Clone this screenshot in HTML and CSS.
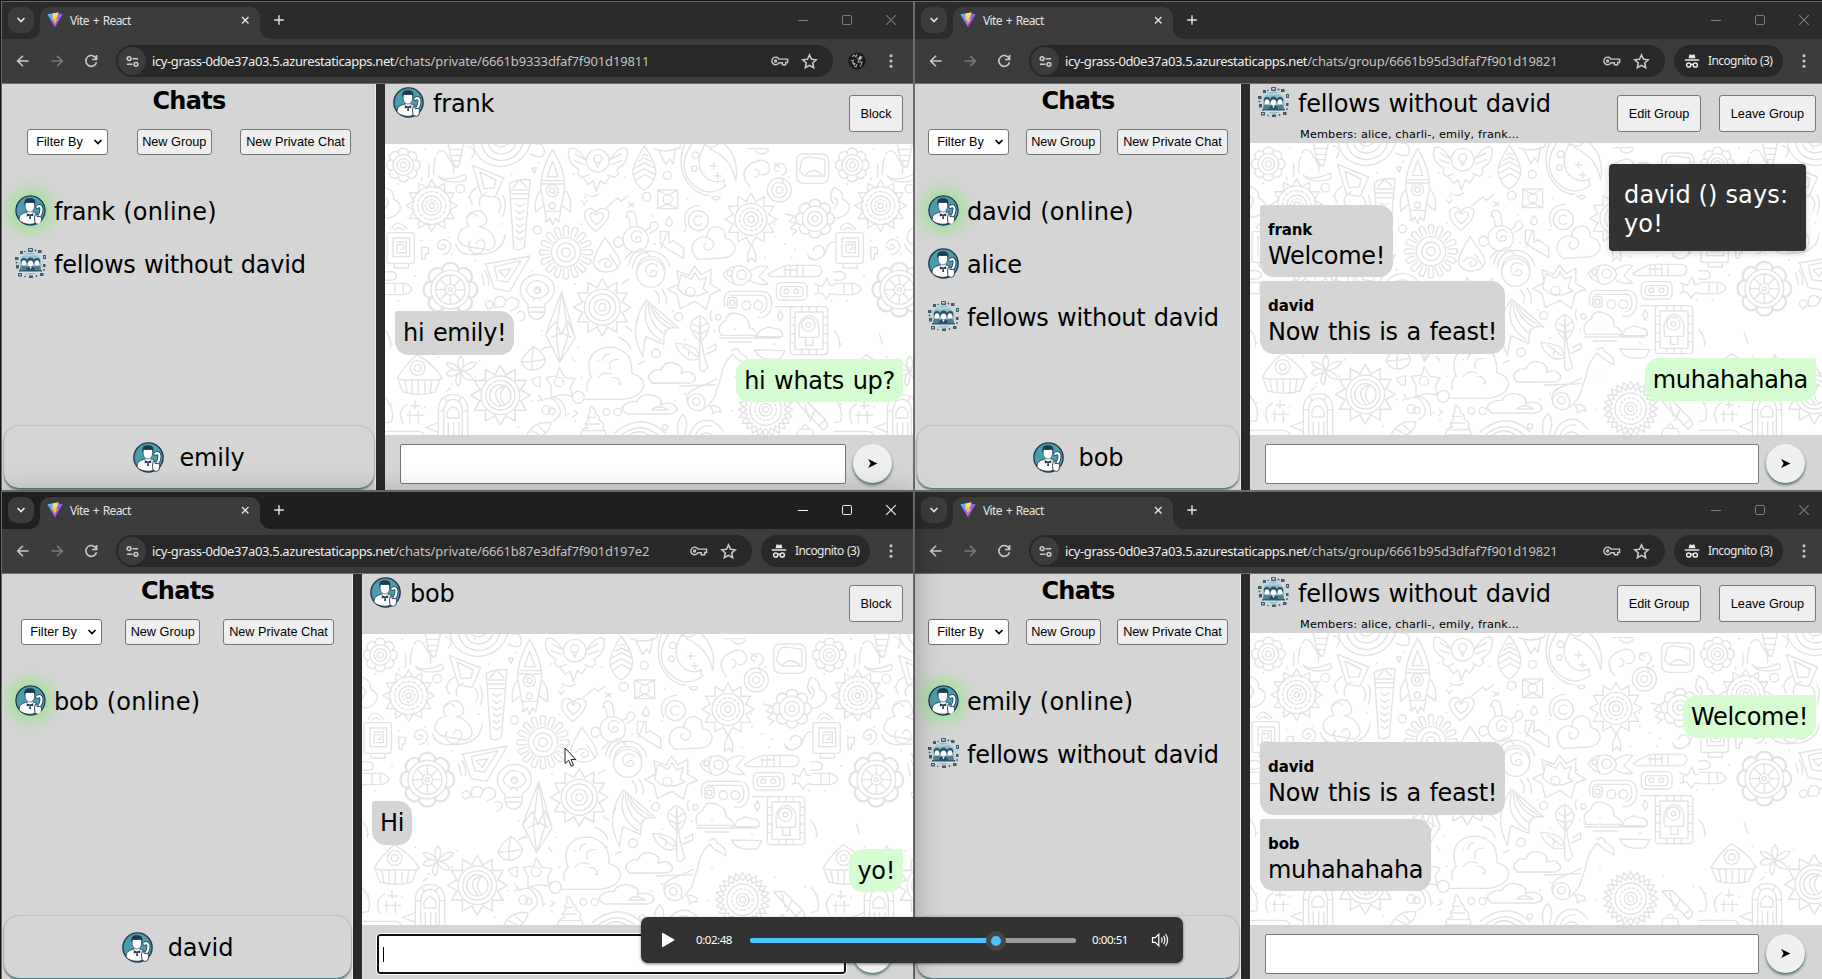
FILE: index.html
```html
<!DOCTYPE html>
<html lang="en">
<head>
<meta charset="utf-8">
<title>Vite + React</title>
<link rel="stylesheet" href="styles.css">
</head>
<body>
<svg class="defs" width="0" height="0" aria-hidden="true">
  <defs>
    <linearGradient id="vite-a" x1="0" y1="0" x2="1" y2="1"><stop offset="0" stop-color="#41d1ff"/><stop offset=".6" stop-color="#9b54f5"/><stop offset="1" stop-color="#bd34fe"/></linearGradient>
    <linearGradient id="vite-b" x1="0" y1="0" x2="0" y2="1"><stop offset="0" stop-color="#ffea83"/><stop offset="1" stop-color="#ffa800"/></linearGradient>
    <symbol id="i-vite" viewBox="0 0 16 16"><path d="M.4 2.2 7.8.9l7.8 1.3L8 15.4z" fill="url(#vite-a)"/><path d="M11.6.2 5.6 1.4 5.2 8l1.9-.4-.6 2.6 1.3-.4-.9 3.6L11 7.1l-1.8.3L11.6.2z" fill="url(#vite-b)"/></symbol>
    <symbol id="i-down" viewBox="0 0 16 16"><path d="M4.500 6 8 9.500 11.500 6" fill="none" stroke="currentColor" stroke-width="1.700"/></symbol>
    <symbol id="i-x" viewBox="0 0 16 16"><path d="M5 5l6.500 6.500M11.500 5 5 11.500" fill="none" stroke="currentColor" stroke-width="1.400"/></symbol>
    <symbol id="i-plus" viewBox="0 0 16 16"><path d="M8 3.200v9.600M3.200 8h9.600" fill="none" stroke="currentColor" stroke-width="1.400"/></symbol>
    <symbol id="i-min" viewBox="0 0 16 16"><path d="M3 8.500h10" stroke="currentColor"/></symbol>
    <symbol id="i-max" viewBox="0 0 16 16"><rect x="3.500" y="3.500" width="9" height="9" rx="1.200" fill="none" stroke="currentColor"/></symbol>
    <symbol id="i-close" viewBox="0 0 16 16"><path d="M3.200 3.200l9.600 9.600M12.800 3.200l-9.600 9.600" stroke="currentColor" stroke-width="1.100"/></symbol>
    <symbol id="i-back" viewBox="0 0 20 20"><path d="M15.500 10H5M10 4.700 4.700 10l5.300 5.300" fill="none" stroke="currentColor" stroke-width="1.600"/></symbol>
    <symbol id="i-fwd" viewBox="0 0 20 20"><path d="M4.500 10H15M10 4.700l5.300 5.300-5.300 5.300" fill="none" stroke="currentColor" stroke-width="1.600"/></symbol>
    <symbol id="i-reload" viewBox="0 0 20 20"><path d="M15.300 8A5.400 5.400 0 1 0 15.500 11.200M15.600 4v4.500h-4.500" fill="none" stroke="currentColor" stroke-width="1.600"/></symbol>
    <symbol id="i-site" viewBox="0 0 16 16"><g fill="none" stroke="currentColor" stroke-width="1.700"><circle cx="4.300" cy="5" r="2"/><path d="M8 5h6M2 11h6"/><circle cx="11.700" cy="11" r="2"/></g></symbol>
    <symbol id="i-key" viewBox="0 0 20 14"><g fill="none" stroke="currentColor" stroke-width="1.500"><path d="M9.500 5h9v3.500h-2V11h-3.500V8.800H9.500A4 4 0 1 1 9.500 5z"/><circle cx="5.900" cy="7" r="1"/></g></symbol>
    <symbol id="i-star" viewBox="0 0 16 16"><path d="M8 1.800l1.900 4.100 4.400.5-3.300 3 .9 4.400L8 11.600l-3.900 2.200.9-4.400-3.300-3 4.400-.5z" fill="none" stroke="currentColor" stroke-width="1.500"/></symbol>
    <symbol id="i-menu" viewBox="0 0 16 16"><g fill="currentColor"><circle cx="8" cy="2.800" r="1.500"/><circle cx="8" cy="8" r="1.500"/><circle cx="8" cy="13.200" r="1.500"/></g></symbol>
    <symbol id="i-spy" viewBox="0 0 16 16"><path d="M4.500 5.200 5.600 1.300 8 2l2.400-.7 1.100 3.900z" fill="currentColor"/><path d="M.8 7h14.400" stroke="currentColor" stroke-width="1.500"/><g fill="none" stroke="currentColor" stroke-width="1.500"><circle cx="4.700" cy="12" r="2.100"/><circle cx="11.300" cy="12" r="2.100"/><path d="M6.800 11.600q1.200-.8 2.400 0"/></g></symbol>
    <symbol id="i-photo" viewBox="0 0 18 18"><circle cx="9" cy="9" r="8.600" fill="#171717"/><path d="M4 5l2-2 2 2 1-3M11 4l3 1-2 3M2.500 9l3-1-1 3 3 1M9 7l3-1-2 4 4 0-1 3M6 14l2 1 1-3M12 15l1-2" fill="none" stroke="#a0a0a0" stroke-width="1.100"/><circle cx="6" cy="12" r="1" fill="#cfcfcf"/><circle cx="12" cy="6" r="1" fill="#ddd"/></symbol>
    <symbol id="i-send" viewBox="0 0 12 12"><path d="M1.200 1.200 11.300 6 1.200 10.800 3.900 6z"/></symbol>
    <symbol id="i-user" viewBox="0 0 31 31">
      <circle cx="15.500" cy="15.500" r="14.600" fill="#4b9dab" stroke="#21394f" stroke-width="1.400"/>
      <path d="M4 25c0-5.500 3-6.500 8-8h6c4 1 6.500 3 7 7.500-2.500 3.500-6 4.800-10 4.800S6.500 28 4 25z" fill="#fff" stroke="#21394f" stroke-width=".9"/>
      <path d="M12.600 14.500h5v4.500l-2.500 1.800-2.500-1.800z" fill="#fff"/>
      <path d="M10.200 7.500h9.300v4.500q-.8 4.800-4.600 5-3.900-.2-4.700-5z" fill="#fff" stroke="#21394f" stroke-width=".6"/>
      <path d="M9.500 10.500C8.500 5 11 3.200 15.500 3.300c4 0 5.700 2.500 4.700 7.200-.6-1.700-1-2.800-2-3-2.500.6-5 .3-7 0-.8.500-1.300 1.600-1.700 3z" fill="#21394f"/>
      <path d="M11.800 18.300l3.200 1.200 3.200-1.200v3L15 20.600l-3.200.8zM14.500 20h1.200l.3 4h-1.800z" fill="#21394f"/>
      <path d="M22.300 11.800c3.200-1.800 4.600.2 4.100 3.800-.3 2.600-1 4-2 5.400" fill="none" stroke="#21394f" stroke-width="3.800" stroke-linecap="round"/>
      <path d="M22.300 11.800c3.200-1.800 4.600.2 4.100 3.800-.3 2.600-1 4-2 5.400" fill="none" stroke="#fff" stroke-width="2.200" stroke-linecap="round"/>
      <path d="M19.500 23l.8-4 1.400.3.400 2.300 3.600-.3 1 2.500-.8 4.200-2.500 1.500-3.400-1.300z" fill="#fff" stroke="#21394f" stroke-width=".9"/>
    </symbol>
    <symbol id="i-group" viewBox="0 0 31 31">
      <circle cx="15.500" cy="15.500" r="11" fill="#8fbfcb"/>
      <path d="M7 7l5 1 7-2 6 3M9 5.500l6 2 7-1" stroke="#c3dde3" stroke-width=".8" fill="none"/>
      <g fill="#3c5d73"><rect x="13" y="0" width="5" height="4" rx="1"/><rect x="5" y="3" width="3" height="3"/><rect x="23" y="2" width="3.500" height="3"/><rect x="0" y="9" width="3.500" height="3"/><rect x="28" y="7" width="3" height="4"/><rect x="1" y="17" width="3" height="3.500"/><rect x="28" y="16" width="2.500" height="3"/><rect x="3" y="25" width="4" height="3.500"/><rect x="25" y="25" width="3.500" height="3"/><rect x="14" y="27.500" width="4" height="2.500"/><circle cx="20.500" cy="2.500" r="1"/><circle cx="10" cy="3.500" r=".8"/><circle cx="1.500" cy="14.500" r=".9"/><circle cx="29" cy="22" r=".9"/><circle cx="10" cy="28.500" r=".8"/><circle cx="21.500" cy="28" r=".9"/></g>
      <g fill="#cfe3e8"><rect x="14.200" y="1" width="2.600" height="1.500"/><rect x="4.200" y="26" width="1.600" height="1.200"/><rect x="29" y="8.200" width="1" height="1.400"/></g>
      <g fill="#2e4f66"><circle cx="9" cy="13.200" r="3.100"/><circle cx="22" cy="13.200" r="3.100"/><circle cx="15.500" cy="13" r="3.500"/></g>
      <path d="M5 22c0-4 1.500-4.600 4-4.600s3 1 3 4.600zM19 22c0-3.600.5-4.600 3-4.600s4 .6 4 4.600z" fill="#517f92"/><path d="M11 22.500c0-4 2-4.500 4.500-4.500s4.500.5 4.500 4.500z" fill="#2e4f66"/>
      <g fill="#fff"><ellipse cx="9" cy="14.900" rx="2.300" ry="2.700"/><ellipse cx="22" cy="14.900" rx="2.300" ry="2.700"/><ellipse cx="15.500" cy="15.400" rx="2.600" ry="2.900"/><path d="M14.200 18.500h2.600l-1.300 2.800z"/></g>
      <path d="M4 22.800h23" stroke="#2e4f66" stroke-width="1.400"/><path d="M6 24.300h19" stroke="#dbeaee"/>
    </symbol>

    <g id="ray4"><path id="ray" d="M-15-54 0-80 15-54"/><use href="#ray" transform="rotate(30)"/><use href="#ray" transform="rotate(60)"/></g>
    <g id="rays"><use href="#ray4"/><use href="#ray4" transform="rotate(90)"/><use href="#ray4" transform="rotate(180)"/><use href="#ray4" transform="rotate(270)"/></g>
    <g id="pet4"><path id="pet" d="M-6-50-8-72a8 8 0 0 1 16 0L6-50"/><use href="#pet" transform="rotate(22.500)"/><use href="#pet" transform="rotate(45)"/><use href="#pet" transform="rotate(67.500)"/></g>
    <g id="petals"><use href="#pet4"/><use href="#pet4" transform="rotate(90)"/><use href="#pet4" transform="rotate(180)"/><use href="#pet4" transform="rotate(270)"/></g>
    <g id="lobe4"><path id="lobe" d="M-14-34a15 12 0 1 1 28 0"/><use href="#lobe" transform="rotate(45)"/></g>
    <g id="lobes"><use href="#lobe4"/><use href="#lobe4" transform="rotate(90)"/><use href="#lobe4" transform="rotate(180)"/><use href="#lobe4" transform="rotate(270)"/></g>
    <path id="spiral" d="M0 0a6 6 0 0 1 12 2a13 13 0 0 1-25 0a20 20 0 0 1 40-4q1 20-17 27"/>
    <path id="cloud" d="M5 60q-22-20 2-38q10-6 18-3Q35-12 60-2q22 8 16 32q20-14 32 4q10 18-10 26z"/>

    <!-- Wallpaper tile, drawn at three times its displayed size -->
    <g id="tile" transform="scale(.33333)" fill="none" stroke="#e3e3e3" stroke-width="4.200" stroke-linecap="round" stroke-linejoin="round">
      <g transform="translate(55 63)"><use href="#lobes"/><circle r="31"/><circle r="19"/><circle r="9"/></g>
      <path d="M190 0l12 62q10 16 20 0L235 0M193 16h40M196 34h34M198 50h28M250 8q30 10 10 34M130 100q4-30 0-40M146 90q-2-30 6-50M160 96q20 20 80-5q14 20-20 22q-50 4-60-17M155 30q15-20 30 0q15 35 35 40"/>
      <path d="M265 0q10 60 80 68q70-5 92-68M290 0q10 45 58 50q52-4 65-50M310 0q8 28 40 30q32-2 42-30M330 0q15 18 40 0M438 30q42 20 40-10q-4-25-24-20M262 64l28 90 40 6 26-58zM285 84l12 50 30-2 6-24z"/>
      <g transform="translate(140 185)"><use href="#rays" transform="scale(.97)"/><circle r="57"/><circle r="42" stroke-dasharray="9 7"/><circle r="29"/><circle r="18" stroke-dasharray="7 6"/><circle r="8"/></g>
      <path d="M0 130q30 10 25 35q40 20 5 50q-30 15-30 0M0 160q20 10 0 35M20 255q15-35 45 0M28 258q14-14 28 0M12 266q-6 0-6 6v78q0 8 6 8h68q8 0 8-8v-78q0-6-8-6zM24 282h50v56H24zM36 294h28v32H36V302h20v14H46M28 360v12h42v-12M0 384q32-6 34 12q0 16-34 12M0 418h60q30 12 16 26l-16 8H0M30 418v30M55 418v30M110 310h20v20h-8l-2 16h-9z"/>
      <g transform="translate(170 305) rotate(15)"><use href="#spiral"/></g>
      <circle cx="226" cy="134" r="13"/><path d="M262 180q-20-30 15-50M285 186q-10-25 20-40M336 160q20 20 5 45M354 155q14 25 0 60"/>
      <path d="M240 306q-34-18-12-48q10-10 24-10q-20-34 14-46q28-8 38 20q6 22-22 26q34 6 46 36q8 25-16 34zM250 218q14-20 28 0M212 300q10 36 62 32q80 0 86-60M275 300a12 12 0 1 1 24 0a24 24 0 1 1-44-8"/>
      <path d="M373 118q30-16 62-10L418 310q-14 12-32 4zM374 138h58M376 150h56M380 164h48M400 112l-16 20M405 110l20 20M392 180l12 8 14-8M392 200l12 8 14-8M392 220l12 8 13-8M394 240l10 8 12-8M394 260l10 8 10-8M394 280l10 8 10-8"/>
      <path d="M503 16q-40 70-35 122l12 64h46l12-64q5-54-35-122zM503 52l-16 46h32zM474 110h60M470 120h68M466 140q-20 22-14 64l24-20M542 140q20 22 14 64l-26-20M480 204l6 30 9-12 8 20 8-20 10 12 6-30"/><circle cx="502" cy="140" r="18"/><circle cx="502" cy="140" r="8"/><circle cx="502" cy="186" r="9"/><circle cx="457" cy="258" r="12"/>
      <circle cx="638" cy="50" r="34"/><circle cx="638" cy="44" r="12"/><path d="M632 56l6 14 6-14M604 50Q570 0 552 16q-8 40 30 60q-10 16 8 24l22-8M672 50q34-50 54-34q6 40-30 60q10 16-8 24l-20-8M570 30l28 16M568 50l30 12M708 30l-32 16M710 50l-32 12M594 100l16 22 14-12 10 32 12-32 14 10 16-26"/>
      <path d="M778 6q-38 60-34 86q10 36 34 46q26-14 34-46q2-34-34-86zM746 74l32-18 34 18M746 92l32-18 32 18M752 108l28-16 28 16M760 52l18-10 20 10M770 36l10-6 8 6"/><circle cx="785" cy="158" r="13"/>
      <path d="M806 14q40 16 80-4V0M820 16l22 46 12-18 10 16 8-48"/><circle cx="847" cy="94" r="12"/><path d="M818 138h60v56h-60zM818 138l30 16 30-16M818 194l30-14 30 14"/><circle cx="848" cy="166" r="14"/>
      <path d="M920 0q-50 76 10 126q44 36 92 0q-8-6-4-20M898 0q-30 90 34 140q20 14 40 14M960 0q-40 70 10 106q24 12 44 4M960 0q20 20 40 0M1018 0q46 40 34 110q-14-70-80-96M986 56v20M976 66h20M998 86v20M988 96h20"/><circle cx="932" cy="34" r="10"/><circle cx="928" cy="74" r="8"/>
      <g transform="translate(1098 226)"><use href="#rays" transform="scale(.98)"/><circle r="48"/><circle r="34" stroke-dasharray="9 7"/><circle r="22"/><circle r="10"/></g>
      <path d="M1094 128q-34-40 0-66q50-30 60 8q0 24-24 22M1110 100a12 12 0 1 0 0-24M1090 14h60M1110 20q20 20 40 0M1170 68a18 18 0 1 1 20 26M1184 72a8 8 0 1 0-4 8M1235 50q0-18 16-20h60q20 0 20 24v42q0 20-20 22h-50q-26 0-26-20zM1250 50q10-14 30-10l40 6v50h-60l-16-14zM1262 92q20-24 50 0"/>
      <circle cx="1183" cy="138" r="36"/><circle cx="1183" cy="138" r="23"/><circle cx="1183" cy="138" r="10"/>
      <g transform="translate(1290 224)"><use href="#lobes" transform="scale(1.150)"/><circle r="38"/><circle r="22"/><circle r="9"/></g>
      <path d="M1202 210l26 6-16 16 20 6-16 14 20 8-14 12M1270 340q20 20 50-10q10-40 27-35M1284 320a17 17 0 1 1 34 4a26 26 0 0 1-50 6M1347 130q-20 30 0 50"/>
      <path d="M632 262q-44-34-30-62q16-16 32 6q14-22 36-6q10 26-38 62zM634 242q-26-20-16-34q8-6 16 6q12-14 20-4q6 14-20 32M664 190l34-28 10 10 22-16M600 150q24 14 40 0M660 280q-38 60-34 80q10 26 40 24q30 0 40-26l-6-20zM640 356q20-24 40 0q0 14-16 14q-10-8 0-14"/>
      <g transform="translate(543 325)"><use href="#petals"/><circle r="44"/><circle r="28"/><circle r="13"/></g>
      <circle cx="752" cy="286" r="38"/><path d="M752 286a8 8 0 1 1 8 8a17 17 0 1 1 10-26M736 250l-4-26q-16-12 0-22q18-2 20 14l4 28M780 260l16-8q-2-20 14-18q16 10 4 22l-20 12M714 288q-16-18-26 0q-4 20 12 22l18-10M740 324l-20 20M780 320l16 18M826 262h26v36l12-8 32 22v32l-50-30-20-16zM848 262l-20 50"/>
      <circle cx="940" cy="230" r="30"/><path d="M950 220a14 14 0 1 0 0 20M904 250q-20-60 40-66M852 218q-20 26 0 28q20-4 0-28M980 160q14-6 26 0q-10 16-26 0"/>
      <path d="M938 346q-28-28-10-52q16-20 38-14q0-30 30-32q26 4 26 36q30 4 28 34q-10 22-34 24zM960 280q28 4 26 26q-10 20-26 8q-8-10 2-16M1100 300l12 30v24l-12-12-12 12v-24z"/>
      <path d="M302 360l134-24-62 106-46-8zM328 368l80-18-40 64-30-4zM342 380l36-6-18 26z"/>
      <g transform="translate(196 437)"><use href="#lobes" transform="scale(1.600)"/><circle r="58"/><circle r="44"/><circle r="16"/><circle r="6"/><path d="M0-44v28M0 16v28M-44 0h28M16 0h28M-31-31l20 20M11 11l20 20M31-31 11-11M-11 11l-20 20"/></g>
      <path d="M428 480q-34-32-16-64q20-28 52-24q46 8 44 50q-6 24-28 38v20q-2 24-26 26q-22-4-24-24zM434 490h44M434 504h44M424 440q6-30 34-30q30 4 34 32q-14 20-32 20q-26 0-36-22M446 442q8-16 22 0M446 470v-8M466 470v-8"/><circle cx="457" cy="438" r="9"/>
      <path d="M530 442l-48 130 42 84 46-74zM530 442l-16 130 10 84M530 442l20 130-26 84M482 572l30-40 16 40 20-42 22 48M500 580l30-14 28 14"/>
      <path d="M310 496q-20-20 4-26q16 6 8 20zM330 490q-8-36 20-32q22 10 4 30zM364 470q14-20 36 0q6 24-24 30M398 506q10-10 22 4q0 20-16 22"/>
      <g transform="translate(652 490)"><use href="#rays" transform="scale(1.080)"/><circle r="54"/><circle r="40"/><circle r="24"/><circle r="11"/></g>
      <circle cx="797" cy="388" r="42"/><path d="M797 388a9 9 0 1 1 8 9a19 19 0 1 1 12-30M756 376q6-40 44-38q34 2 40 40M742 372q8-52 60-50q40 4 52 46M730 365q10-44 40-52M710 420l20-14M832 436q18 30 10 44M810 440q20 20 10 40M700 372l-26-40M876 380l36 14 16-28 20 26 30-16-2 44 30 18-30 14-12 44-34-24-44 22-10-42-28-16 34-16zM888 392l30 14 12-20 14 22 20-8-10 34 14 10-30 12-40-4-20-18z"/><circle cx="916" cy="444" r="14"/>
      <path d="M1014 390q24-28 56-24q24 6 30 30q-10 22-36 28q-34-4-50-34zM1050 368q-20 26 0 52M1096 380q30-20 52-12l-26 30 26 22q-30 6-54-12"/><circle cx="1034" cy="388" r="8"/><circle cx="1070" cy="392" r="14"/><path d="M1148 392q40-26 60-28h84q20 0 18 20q-4 14-20 14h-130zM1200 366v28M1216 364v34M1236 364v34M1254 364v34M1196 378h40"/>
      <rect x="1174" y="416" width="92" height="52" rx="14"/><rect x="1186" y="428" width="68" height="30" rx="10"/><circle cx="1204" cy="442" r="7"/><circle cx="1234" cy="442" r="7"/>
      <path d="M1020 486q-8-36 14-44h98q30 2 28 40q0 28-26 38h-16M1034 454h100q12 4 12 30q-4 20-20 22"/><rect x="1028" y="460" width="28" height="32" rx="8"/><circle cx="1084" cy="484" r="13"/><circle cx="1120" cy="484" r="13"/><circle cx="1042" cy="476" r="8"/>
      <path d="M1290 420l22 8 14-26 8 22h13M1290 450l20-4 14 20 10-16h13M1300 428v20"/>
      <rect x="1216" y="488" width="112" height="144" rx="10"/><rect x="1230" y="504" width="84" height="112"/><path d="M1216 520h14M1216 544h14M1216 570h14M1216 596h14M1314 520h14M1314 544h14M1314 570h14M1314 596h14M1250 488v16M1272 488v16M1294 488v16M1250 616v16M1272 616v16M1294 616v16M1244 580q-10-60 28-66q38 6 28 66zM1262 582v22h22v-22"/><circle cx="1270" cy="542" r="20"/><circle cx="1270" cy="542" r="7"/><path d="M1186 500l8 16-8 16-8-16zM1170 488h60"/>
      <path d="M785 468q-60 80-12 170q4-40 10-60M785 468l96 84q-50-10-44 50l-54-24M785 480q-20 70 44 110M790 474q0 66 50 98M796 480q10 50 60 74M804 488q10 30 60 58"/>
      <path d="M1008 574q-16-30 14-44q10-34 44-18q28 8 26 38q20 4 24 24zM1120 574q0-18 20-20q10-10 26 0q30 0 26 24h-84M1004 582h180M1030 594h70"/>
      <path d="M944 590q-54-50 0-76q54 30 2 80M944 520l4 60q8 60 20 90q-24 30-24-10zM926 540l18 12 20-14M926 560l20 12 18-12M872 598q40 0 64 20l8 26q-30 10-44-6q-22-14-28-40zM892 606l44 32M910 636l2-20M968 614l24-14v18l-28 12"/>
      <path d="M96 632q-40 34-60 72l20 4h100l16-4q-24-44-76-72zM40 710l14 34q50 14 96 0l14-36M60 712l6 32M80 712l2 36M100 712v36M120 712v34M140 712l-4 32"/><circle cx="98" cy="672" r="22"/><circle cx="98" cy="672" r="10"/>
      <path d="M228 680q-20-24 0-44q16 20 0 44q20-30 46-24q-10 24-46 26q30 4 36 26q-26 4-38-24q4 30-6 42q-18-14 4-42q-24 20-40 8q4-20 38-12q-34-4-38-24q28-2 40 24z"/>
      <g transform="translate(346 754)"><use href="#rays" transform="scale(1.120)"/><circle r="58"/><circle r="44"/><circle r="32"/><path d="M14-28q-50 12-12 58M14-28q-26 30-2 54"/></g>
      <path d="M446 608q-30 24-38 46q14 28 40 24q28-4 34-30q-14-30-36-40zM446 610q-8 40-4 66M412 654q34 0 66-8M440 706q26-10 26-6v28q-20 0-26-22M522 670l18 30 30 4-14 26 6 26-34-4-30 8v-34l-14-26 32-4z"/><circle cx="522" cy="714" r="14"/>
      <path d="M618 700q-20-60 24-84q50-20 88 20q14 30 10 52q36 10 36 36q-6 34-60 42H600M640 700q14-20 40-10M652 650q4-20 20-20M676 676q-8-30 24-30M682 700q26 0 24 24M620 700q-20 12-14 40"/><circle cx="580" cy="760" r="18"/>
      <use href="#cloud" transform="translate(798 660) scale(1.200 .950)"/><path d="M800 718h70M884 726l108-4"/><circle cx="813" cy="628" r="13"/>
      <use href="#cloud" transform="translate(720 756) scale(1.400 .900)"/><path d="M800 798q20-20 50 0z"/><circle cx="698" cy="804" r="11"/>
      <path d="M1040 620q20-14 24 6q30 12 28 40l-34-20-16-16q-30 30-34 70l-20 60q-40 60-74 30q-24-40 20-58q40-16 60-26M908 780a26 26 0 1 1 48 8M1108 618l92 2-14 24q-50 6-66-10z"/><circle cx="934" cy="772" r="11"/>
      <g transform="translate(1142 797)"><use href="#rays" transform="scale(1.020)"/><use href="#rays" transform="rotate(15) scale(1.020)"/><circle r="47"/><circle r="32" stroke-dasharray="6 7"/><circle r="19"/><circle r="9"/></g>
      <path d="M1235 774l30-2 54 54q20 20-6 32zM1260 780l10 40M1290 800l-16 32M1320 830l-20 16M1236 876q0-20 10-20h30q10 0 10 20M1250 856q10-26 22 0"/>
      <path d="M160 876v-84q6-40 44-40q40 0 44 40v84M176 876v-76q4-34 28-34q26 0 28 34v76M186 822v-18q18-30 36 0v18zM190 836v40M206 836v40M222 836v40M162 800h14M232 800h14M180 762l6 12M228 762l-8 12M122 850l38-14M122 850l36 14M0 760q30 34 20 72l-20 4M0 862h100q14 0 20 14M68 780q-34 20-14 58M78 786h26M90 770v24M66 814h50M74 802v34M100 802v34"/>
      <path d="M424 876q20-46 74-40q-4 30-30 40M440 860l30 16M460 846l22 20"/><circle cx="484" cy="798" r="13"/><circle cx="500" cy="802" r="10"/><path d="M470 770q40-24 56 30q0 20-20 30M500 758q46 10 42 60M588 876q-2-24 20-24q-14-14 4-24q-8-14 4-24q-6-10 2-18q16 14 14 24q14 6 10 18q20 10 12 26q10 8 8 22zM600 840h44M594 860h60M608 820h26"/><circle cx="664" cy="804" r="10"/>
      <path d="M690 866q80-66 150 0M706 876q60-50 116 0M728 876q34-26 68 0M880 870q-8-40 14-58q20 20 4 60M912 876q20-54 66-46q20 8 36 30M930 876q14-34 46-30M944 876q20-20 40 0M1002 790l6 14-14-2-12 8v-14l-8-10 14-2z"/><circle cx="840" cy="850" r="8"/><circle cx="881" cy="518" r="12"/><circle cx="1000" cy="520" r="8"/>
      <path stroke-width="6" d="M120 16h0M340 16h0M250 160h0M40 120h0M100 240h0M110 290h0M200 330h0M190 280h0M350 240h0M90 396h0M40 470h0M290 200h0M380 90h0M460 56h0M566 90h0M590 240h0M620 320h0M480 232h0M440 380h0M570 420h0M600 160h0M720 100h0M722 220h0M740 180h0M810 300h0M804 215h0M908 166h0M900 260h0M1080 100h0M1170 60h0M1060 160h0M1210 100h0M1168 240h0M1170 280h0M1200 300h0M1230 316h0M1220 340h0M1140 340h0M980 410h0M1006 440h0M830 300h0M864 500h0M840 560h0M900 586h0M990 560h0M1050 556h0M1170 600h0M1340 470h0M1200 470h0M20 600h0M160 640h0M200 720h0M284 650h0M270 700h0M20 780h0M120 790h0M400 850h0M440 770h0M590 700h0M580 610h0M640 650h0M700 720h0M734 640h0M760 880h0M900 750h0M870 770h0M980 830h0M1040 800h0M1050 700h0M920 690h0M1240 730h0M1330 760h0M550 810h0M570 830h0M300 360h0M270 350h0M520 400h0M590 380h0M690 440h0M470 560h0"/>
      <path d="M300 380q14 20 10 44M290 390l8 34M440 72l8 16 6-16zM590 170l8 12 8-12M730 176l16 12M730 190l18-12M206 48v40M110 100v10M184 742l12-10M136 570l10 30M760 520q0 12-8 14M0 560q20 20 16 50M1190 100l6 14M980 500q-8 10 0 30M740 560l-18-14M500 610q-20-4-30 8M560 640l10 14M700 580q30 10 36 34M760 660l18-8M460 754l10 10-12 8M568 800l10 8-14 10"/>
    </g>
  </defs>
</svg>

<main class="desktop">

  <section class="window">
    <header class="tabstrip">
      <span class="tab-search"><svg width="16" height="16"><use href="#i-down"/></svg></span>
      <div class="tab"><svg width="16" height="16"><use href="#i-vite"/></svg><span class="tab-title">Vite + React</span><svg width="16" height="16"><use href="#i-x"/></svg></div>
      <svg class="new-tab" width="16" height="16"><use href="#i-plus"/></svg>
      <div class="caption"><svg width="16" height="16"><use href="#i-min"/></svg><svg width="16" height="16"><use href="#i-max"/></svg><svg width="16" height="16"><use href="#i-close"/></svg></div>
    </header>
    <nav class="toolbar">
      <svg width="20" height="20"><use href="#i-back"/></svg><svg class="off" width="20" height="20"><use href="#i-fwd"/></svg><svg width="20" height="20"><use href="#i-reload"/></svg>
      <div class="omnibox"><span class="site"><svg width="15" height="15"><use href="#i-site"/></svg></span><span class="url">icy-grass-0d0e37a03.5.azurestaticapps.net<span class="path">/chats/private/6661b9333dfaf7f901d19811</span></span><svg width="19" height="14"><use href="#i-key"/></svg><svg class="star" width="17" height="17"><use href="#i-star"/></svg></div>
      <svg class="photo" width="18" height="18"><use href="#i-photo"/></svg>
      <svg class="menu" width="16" height="16"><use href="#i-menu"/></svg>
    </nav>
    <div class="page page-wide">
      <aside class="sidebar">
        <h1 class="title">Chats</h1>
        <div class="controls"><span class="select">Filter By<svg width="16" height="16"><use href="#i-down"/></svg></span><button class="btn">New Group</button><button class="btn btn-long">New Private Chat</button></div>
        <ul class="list">
          <li class="item"><svg class="avatar online"><use href="#i-user"/></svg><span>frank <span class="status">(online)</span></span></li>
          <li class="item"><svg class="avatar"><use href="#i-group"/></svg><span>fellows without david</span></li>
        </ul>
        <footer class="me"><svg class="avatar"><use href="#i-user"/></svg><span>emily</span></footer>
      </aside>
      <section class="chat">
        <header class="chat-head"><svg class="avatar"><use href="#i-user"/></svg><div class="who"><div class="name">frank</div></div><button class="action block">Block</button></header>
        <div class="messages">
          <svg class="wallpaper"><use href="#tile"/><use href="#tile" transform="translate(449 0)"/></svg>
          <p class="msg">hi emily!</p>
          <p class="msg mine">hi whats up?</p>
        </div>
        <form class="composer"><div class="input"></div><div class="send"><svg width="11" height="11"><use href="#i-send"/></svg></div></form>
      </section>
    </div>
  </section>

  <section class="window">
    <header class="tabstrip">
      <span class="tab-search"><svg width="16" height="16"><use href="#i-down"/></svg></span>
      <div class="tab"><svg width="16" height="16"><use href="#i-vite"/></svg><span class="tab-title">Vite + React</span><svg width="16" height="16"><use href="#i-x"/></svg></div>
      <svg class="new-tab" width="16" height="16"><use href="#i-plus"/></svg>
      <div class="caption"><svg width="16" height="16"><use href="#i-min"/></svg><svg width="16" height="16"><use href="#i-max"/></svg><svg width="16" height="16"><use href="#i-close"/></svg></div>
    </header>
    <nav class="toolbar">
      <svg width="20" height="20"><use href="#i-back"/></svg><svg class="off" width="20" height="20"><use href="#i-fwd"/></svg><svg width="20" height="20"><use href="#i-reload"/></svg>
      <div class="omnibox"><span class="site"><svg width="15" height="15"><use href="#i-site"/></svg></span><span class="url">icy-grass-0d0e37a03.5.azurestaticapps.net<span class="path">/chats/group/6661b95d3dfaf7f901d19821</span></span><svg width="19" height="14"><use href="#i-key"/></svg><svg class="star" width="17" height="17"><use href="#i-star"/></svg></div>
      <div class="incognito"><svg width="16" height="16"><use href="#i-spy"/></svg><span>Incognito (3)</span></div>
      <svg class="menu" width="16" height="16"><use href="#i-menu"/></svg>
    </nav>
    <div class="page page-narrow">
      <aside class="sidebar">
        <h1 class="title">Chats</h1>
        <div class="controls"><span class="select">Filter By<svg width="16" height="16"><use href="#i-down"/></svg></span><button class="btn">New Group</button><button class="btn btn-long">New Private Chat</button></div>
        <ul class="list">
          <li class="item"><svg class="avatar online"><use href="#i-user"/></svg><span>david <span class="status">(online)</span></span></li>
          <li class="item"><svg class="avatar"><use href="#i-user"/></svg><span>alice</span></li>
          <li class="item"><svg class="avatar"><use href="#i-group"/></svg><span>fellows without david</span></li>
        </ul>
        <footer class="me"><svg class="avatar"><use href="#i-user"/></svg><span>bob</span></footer>
      </aside>
      <section class="chat">
        <header class="chat-head"><svg class="avatar"><use href="#i-group"/></svg><div class="who"><div class="name">fellows without david</div><div class="members">Members: alice, charli-, emily, frank...</div></div><button class="action edit">Edit Group</button><button class="action leave">Leave Group</button></header>
        <div class="messages">
          <svg class="wallpaper"><use href="#tile"/><use href="#tile" transform="translate(449 0)"/></svg>
          <div class="toast">david () says:<br>yo!</div>
          <p class="msg"><b>frank</b>Welcome!</p>
          <p class="msg"><b>david</b>Now this is a feast!</p>
          <p class="msg mine">muhahahaha</p>
        </div>
        <form class="composer"><div class="input"></div><div class="send"><svg width="11" height="11"><use href="#i-send"/></svg></div></form>
      </section>
    </div>
  </section>

  <section class="window active">
    <header class="tabstrip">
      <span class="tab-search"><svg width="16" height="16"><use href="#i-down"/></svg></span>
      <div class="tab"><svg width="16" height="16"><use href="#i-vite"/></svg><span class="tab-title">Vite + React</span><svg width="16" height="16"><use href="#i-x"/></svg></div>
      <svg class="new-tab" width="16" height="16"><use href="#i-plus"/></svg>
      <div class="caption"><svg width="16" height="16"><use href="#i-min"/></svg><svg width="16" height="16"><use href="#i-max"/></svg><svg width="16" height="16"><use href="#i-close"/></svg></div>
    </header>
    <nav class="toolbar">
      <svg width="20" height="20"><use href="#i-back"/></svg><svg class="off" width="20" height="20"><use href="#i-fwd"/></svg><svg width="20" height="20"><use href="#i-reload"/></svg>
      <div class="omnibox"><span class="site"><svg width="15" height="15"><use href="#i-site"/></svg></span><span class="url">icy-grass-0d0e37a03.5.azurestaticapps.net<span class="path">/chats/private/6661b87e3dfaf7f901d197e2</span></span><svg width="19" height="14"><use href="#i-key"/></svg><svg class="star" width="17" height="17"><use href="#i-star"/></svg></div>
      <div class="incognito"><svg width="16" height="16"><use href="#i-spy"/></svg><span>Incognito (3)</span></div>
      <svg class="menu" width="16" height="16"><use href="#i-menu"/></svg>
    </nav>
    <div class="page page-medium">
      <aside class="sidebar">
        <h1 class="title">Chats</h1>
        <div class="controls"><span class="select">Filter By<svg width="16" height="16"><use href="#i-down"/></svg></span><button class="btn">New Group</button><button class="btn btn-long">New Private Chat</button></div>
        <ul class="list">
          <li class="item"><svg class="avatar online"><use href="#i-user"/></svg><span>bob <span class="status">(online)</span></span></li>
        </ul>
        <footer class="me"><svg class="avatar"><use href="#i-user"/></svg><span>david</span></footer>
      </aside>
      <section class="chat">
        <header class="chat-head"><svg class="avatar"><use href="#i-user"/></svg><div class="who"><div class="name">bob</div></div><button class="action block">Block</button></header>
        <div class="messages">
          <svg class="wallpaper"><use href="#tile"/><use href="#tile" transform="translate(449 0)"/></svg>
          <p class="msg">Hi</p>
          <p class="msg mine">yo!</p>
        </div>
        <form class="composer"><div class="input focused"><span class="caret"></span></div><div class="send"><svg width="11" height="11"><use href="#i-send"/></svg></div></form>
      </section>
    </div>
  </section>

  <section class="window">
    <header class="tabstrip">
      <span class="tab-search"><svg width="16" height="16"><use href="#i-down"/></svg></span>
      <div class="tab"><svg width="16" height="16"><use href="#i-vite"/></svg><span class="tab-title">Vite + React</span><svg width="16" height="16"><use href="#i-x"/></svg></div>
      <svg class="new-tab" width="16" height="16"><use href="#i-plus"/></svg>
      <div class="caption"><svg width="16" height="16"><use href="#i-min"/></svg><svg width="16" height="16"><use href="#i-max"/></svg><svg width="16" height="16"><use href="#i-close"/></svg></div>
    </header>
    <nav class="toolbar">
      <svg width="20" height="20"><use href="#i-back"/></svg><svg class="off" width="20" height="20"><use href="#i-fwd"/></svg><svg width="20" height="20"><use href="#i-reload"/></svg>
      <div class="omnibox"><span class="site"><svg width="15" height="15"><use href="#i-site"/></svg></span><span class="url">icy-grass-0d0e37a03.5.azurestaticapps.net<span class="path">/chats/group/6661b95d3dfaf7f901d19821</span></span><svg width="19" height="14"><use href="#i-key"/></svg><svg class="star" width="17" height="17"><use href="#i-star"/></svg></div>
      <div class="incognito"><svg width="16" height="16"><use href="#i-spy"/></svg><span>Incognito (3)</span></div>
      <svg class="menu" width="16" height="16"><use href="#i-menu"/></svg>
    </nav>
    <div class="page page-narrow">
      <aside class="sidebar">
        <h1 class="title">Chats</h1>
        <div class="controls"><span class="select">Filter By<svg width="16" height="16"><use href="#i-down"/></svg></span><button class="btn">New Group</button><button class="btn btn-long">New Private Chat</button></div>
        <ul class="list">
          <li class="item"><svg class="avatar online"><use href="#i-user"/></svg><span>emily <span class="status">(online)</span></span></li>
          <li class="item"><svg class="avatar"><use href="#i-group"/></svg><span>fellows without david</span></li>
        </ul>
        <footer class="me"></footer>
      </aside>
      <section class="chat">
        <header class="chat-head"><svg class="avatar"><use href="#i-group"/></svg><div class="who"><div class="name">fellows without david</div><div class="members">Members: alice, charli-, emily, frank...</div></div><button class="action edit">Edit Group</button><button class="action leave">Leave Group</button></header>
        <div class="messages">
          <svg class="wallpaper"><use href="#tile"/><use href="#tile" transform="translate(449 0)"/></svg>
          <p class="msg mine">Welcome!</p>
          <p class="msg"><b>david</b>Now this is a feast!</p>
          <p class="msg"><b>bob</b>muhahahaha</p>
        </div>
        <form class="composer"><div class="input"></div><div class="send"><svg width="11" height="11"><use href="#i-send"/></svg></div></form>
      </section>
    </div>
  </section>
</main>

<div class="player">
  <svg width="16" height="16" viewBox="0 0 16 16"><path d="M2 1.500q0-1 1-.6l11 6.300q1 .7 0 1.400L3 15q-1 .3-1-.6z" fill="#fff"/></svg>
  <span class="time">0:02:48</span>
  <div class="track"><div class="fill"></div><div class="thumb"></div></div>
  <span class="time">0:00:51</span>
  <svg class="volume" width="18" height="16" viewBox="0 0 18 16"><path d="M1.500 5.700h2.800L7.800 2.200v11.600L4.300 10.300H1.500zM10.300 5.700q1.600 2.300 0 4.600M12.500 3.900q2.700 4.100 0 8.200M14.500 2q4.200 6 0 12" fill="none" stroke="#fff" stroke-width="1.200"/></svg>
</div>
<svg class="cursor" width="13" height="21" viewBox="0 0 13 21"><path d="M1 1v15.500l3.700-3.300 2.400 6 2.400-1-2.400-5.700h4.600z" fill="#fff" stroke="#222"/></svg>
</body>
</html>
```

FILE: styles.css
```css
* { box-sizing: border-box; }
body {
  margin: 0;
  width: 1822px;
  height: 979px;
  overflow: hidden;
  position: relative;
  background: #141414;
  font-family: Verdana, "DejaVu Sans", sans-serif;
  color: #000;
}
svg { display: block; flex: none; }
.defs { position: absolute; }
h1, p, ul { margin: 0; padding: 0; list-style: none; }
button { font: inherit; color: #000; padding: 0; }

.desktop {
  display: grid;
  grid-template-columns: 913px 913px;
  grid-template-rows: 490px 490px;
  padding: 1px 0 0 1px;
}
.window {
  display: flex;
  flex-direction: column;
  border: 1px solid #6c6c6c;
  background: #3c3c3c;
  overflow: hidden;
}
.window.active { z-index: 1; overflow: visible; box-shadow: 0 4px 26px rgba(0, 0, 0, .3); }

/* Browser chrome */
.tabstrip {
  height: 37px;
  display: flex;
  align-items: flex-start;
  padding: 5px 14px 0 6px;
  background: #2b2b2b;
  color: #e3e3e3;
  font: 12px/16px "Noto Sans", sans-serif;
}
.active .tabstrip { background: #1f1f1f; }
.tab-search {
  width: 26px;
  height: 26px;
  display: grid;
  place-items: center;
  border-radius: 9px;
  background: #3c3c3c;
}
.tab {
  position: relative;
  width: 220px;
  height: 32px;
  margin-left: 6px;
  padding: 5px 7px 0 7px;
  display: flex;
  background: #3c3c3c;
  border-radius: 10px 10px 0 0;
}
.tab::before, .tab::after {
  content: "";
  position: absolute;
  bottom: 0;
  width: 10px;
  height: 10px;
}
.tab::before { left: -10px; background: radial-gradient(circle at 0 0, transparent 9.500px, #3c3c3c 10px); }
.tab::after { right: -10px; background: radial-gradient(circle at 100% 0, transparent 9.500px, #3c3c3c 10px); }
.tab-title { flex: 1; margin-left: 7px; letter-spacing: -.6px; word-spacing: 1.200px; line-height: 17px; }
.new-tab { margin: 5px 0 0 11px; }
.caption { margin: 5px 0 0 auto; display: flex; gap: 28px; color: #7d7d7d; }
.active .caption { color: #f2f2f2; }
.toolbar {
  height: 45px;
  display: flex;
  align-items: center;
  gap: 14px;
  padding: 0 14px 0 11px;
  background: #3c3c3c;
  border-bottom: 1px solid #6f6f6f;
  color: #c9c9c9;
  font: 13px/18px "Noto Sans", sans-serif;
}
.off { color: #7a7a7a; }
.omnibox {
  flex: 1;
  height: 32px;
  margin-left: 1px;
  padding: 0 15px 0 2px;
  display: flex;
  align-items: center;
  border-radius: 16px;
  background: #282828;
}
.site {
  width: 28px;
  height: 28px;
  display: grid;
  place-items: center;
  border-radius: 50%;
  background: #3c3c3c;
}
.url { flex: 1; margin-left: 6px; color: #f0f0f0; white-space: nowrap; letter-spacing: -.4px; }
.path { color: #c3c3c3; letter-spacing: -.140px; }
.star { margin-left: 12px; }
.photo { margin-left: 1px; }
.menu { margin-left: 3px; }
.incognito {
  width: 109px;
  height: 32px;
  margin-left: -5px;
  margin-right: -4px;
  padding-left: 10px;
  display: flex;
  align-items: center;
  gap: 8px;
  border-radius: 16px;
  background: #282828;
  color: #e8e8e8;
  font-size: 12px;
  letter-spacing: -.6px;
  word-spacing: 1px;
  white-space: nowrap;
}

/* Chat application */
.page {
  height: 406px;
  display: flex;
  gap: 9px;
  background: #2a2a2a;
}
.sidebar {
  width: 374px;
  flex: none;
  display: flex;
  flex-direction: column;
  padding: 3px 1px 2px 2px;
  background: #d5d5d5;
  border-right: 1px solid #ececec;
}
.page-medium .sidebar { width: 351px; }
.page-narrow .sidebar { width: 326px; }
.title { font-size: 24px; line-height: 28px; letter-spacing: -.7px; text-align: center; }
.controls {
  display: flex;
  justify-content: center;
  gap: 28.500px;
  margin-top: 14px;
  font: 12.700px/24px "Liberation Sans", Arial, sans-serif;
}
.page-medium .controls { gap: 23px; }
.page-narrow .controls { gap: 16.500px; }
.select, .btn {
  height: 26px;
  border: 1px solid #767676;
  border-radius: 3px;
  background: #efefef;
  white-space: nowrap;
}
.select {
  width: 81px;
  display: flex;
  align-items: center;
  justify-content: space-between;
  padding: 0 1px 0 8px;
  background: #fff;
}
.btn { width: 75px; }
.btn-long { width: 110.500px; }
.list {
  display: flex;
  flex-direction: column;
  gap: 22px;
  margin: 40px 0 0 11px;
}
.item {
  height: 31px;
  display: flex;
  align-items: center;
  gap: 8px;
  font-size: 24px;
  line-height: 28px;
  letter-spacing: -.25px;
  word-spacing: 1px;
  white-space: nowrap;
}
.item span, .me span { padding-top: 2px; }
.status { letter-spacing: .2px; }
.avatar { width: 31px; height: 31px; }
.online { border-radius: 50%; box-shadow: 0 0 17px 4px #8fe583; }
.me {
  height: 62px;
  margin-top: auto;
  display: flex;
  align-items: center;
  justify-content: center;
  gap: 15px;
  border-radius: 15px;
  font-size: 24px;
  letter-spacing: -.1px;
  background: #d5d5d5;
  box-shadow: 0 2px 2px #557a7a, 0 0 2px #8a9a9a;
}
.chat { flex: 1; display: flex; flex-direction: column; min-width: 0; background: #d5d5d5; }
.chat-head {
  height: 60px;
  display: flex;
  align-items: flex-start;
  padding: 3px 10px 0 8px;
}
.who { flex: 1; margin-left: 9px; padding-top: 3px; white-space: nowrap; }
.name { font-size: 24px; line-height: 28px; letter-spacing: -.2px; word-spacing: 1px; }
.members { margin: 10px 0 0 2px; font-size: 11.300px; line-height: 13px; letter-spacing: .13px; }
.action {
  height: 37px;
  margin-top: 8px;
  border: 1px solid #767676;
  border-radius: 3px;
  background: #efefef;
  font: 12.700px/20px "Liberation Sans", Arial, sans-serif;
}
.block { width: 54px; }
.edit { width: 84px; margin-right: 18px; }
.leave { width: 97px; }
.messages {
  position: relative;
  height: 291px;
  display: flex;
  flex-direction: column;
  justify-content: flex-end;
  gap: 4px;
  padding: 0 10px 33px;
  background: #fff;
}
.page-narrow .chat-head { height: 59px; }
.page-narrow .messages { height: 292px; padding-bottom: 34px; }
.wallpaper { position: absolute; inset: 0; width: 100%; height: 100%; }
.msg {
  position: relative;
  align-self: flex-start;
  padding: 8px 8px 7.500px;
  border-radius: 3px 14px 14px 14px;
  background: #d5d5d5;
  font-size: 24px;
  line-height: 28px;
  letter-spacing: -.3px;
  word-spacing: 1.300px;
  white-space: nowrap;
}
.msg b {
  display: block;
  margin: 9px 0 3px;
  font-size: 15px;
  line-height: 17px;
  letter-spacing: -.1px;
}
.mine { align-self: flex-end; border-radius: 14px 3px 14px 14px; background: #d6fdd2; }
.toast {
  position: absolute;
  top: 21px;
  right: 20px;
  width: 197px;
  height: 87px;
  padding: 17px 15px;
  border-radius: 4px;
  background: #323232;
  color: #fff;
  font-size: 24px;
  line-height: 29px;
  letter-spacing: .15px;
  white-space: nowrap;
  box-shadow: 0 2px 6px rgba(0, 0, 0, .2);
}
.composer {
  flex: 1;
  display: flex;
  align-items: flex-start;
  gap: 7px;
  padding: 9px 21px 0 15px;
}
.input {
  flex: 1;
  height: 40px;
  border: 1px solid #767676;
  border-radius: 2px;
  background: #fff;
}
.focused { border: 2px solid #101010; border-radius: 3px; padding: 11px 0 0 4px; outline: 1px solid #fff; }
.caret { display: block; width: 1px; height: 15px; background: #000; }
.send {
  width: 39px;
  height: 39px;
  display: grid;
  place-items: center;
  border-radius: 50%;
  background: #efefef;
  box-shadow: 0 2px 3px #4f6f70;
}

/* Video controls */
.player {
  position: absolute;
  z-index: 2;
  left: 641px;
  top: 917px;
  width: 542px;
  height: 46px;
  display: flex;
  align-items: center;
  padding: 0 14px 0 19px;
  border-radius: 7px;
  background: #323232;
  box-shadow: 0 1px 3px rgba(0, 0, 0, .5);
  color: #fff;
  font: 11.500px/16px "Noto Sans", sans-serif;
  letter-spacing: -.45px;
}
.time { width: 38px; margin-left: 20px; }
.track { position: relative; width: 326px; height: 5px; margin: 0 -4px 0 16px; border-radius: 3px; background: #9b9b9b; }
.fill { width: 246px; height: 5px; border-radius: 3px; background: #4cc2ff; }
.thumb {
  position: absolute;
  left: 236px;
  top: -7px;
  width: 20px;
  height: 20px;
  border: 5px solid #454545;
  border-radius: 50%;
  background: #4cc2ff;
}
.volume { margin-left: auto; }
.cursor { position: absolute; z-index: 2; left: 564px; top: 747px; }
```
